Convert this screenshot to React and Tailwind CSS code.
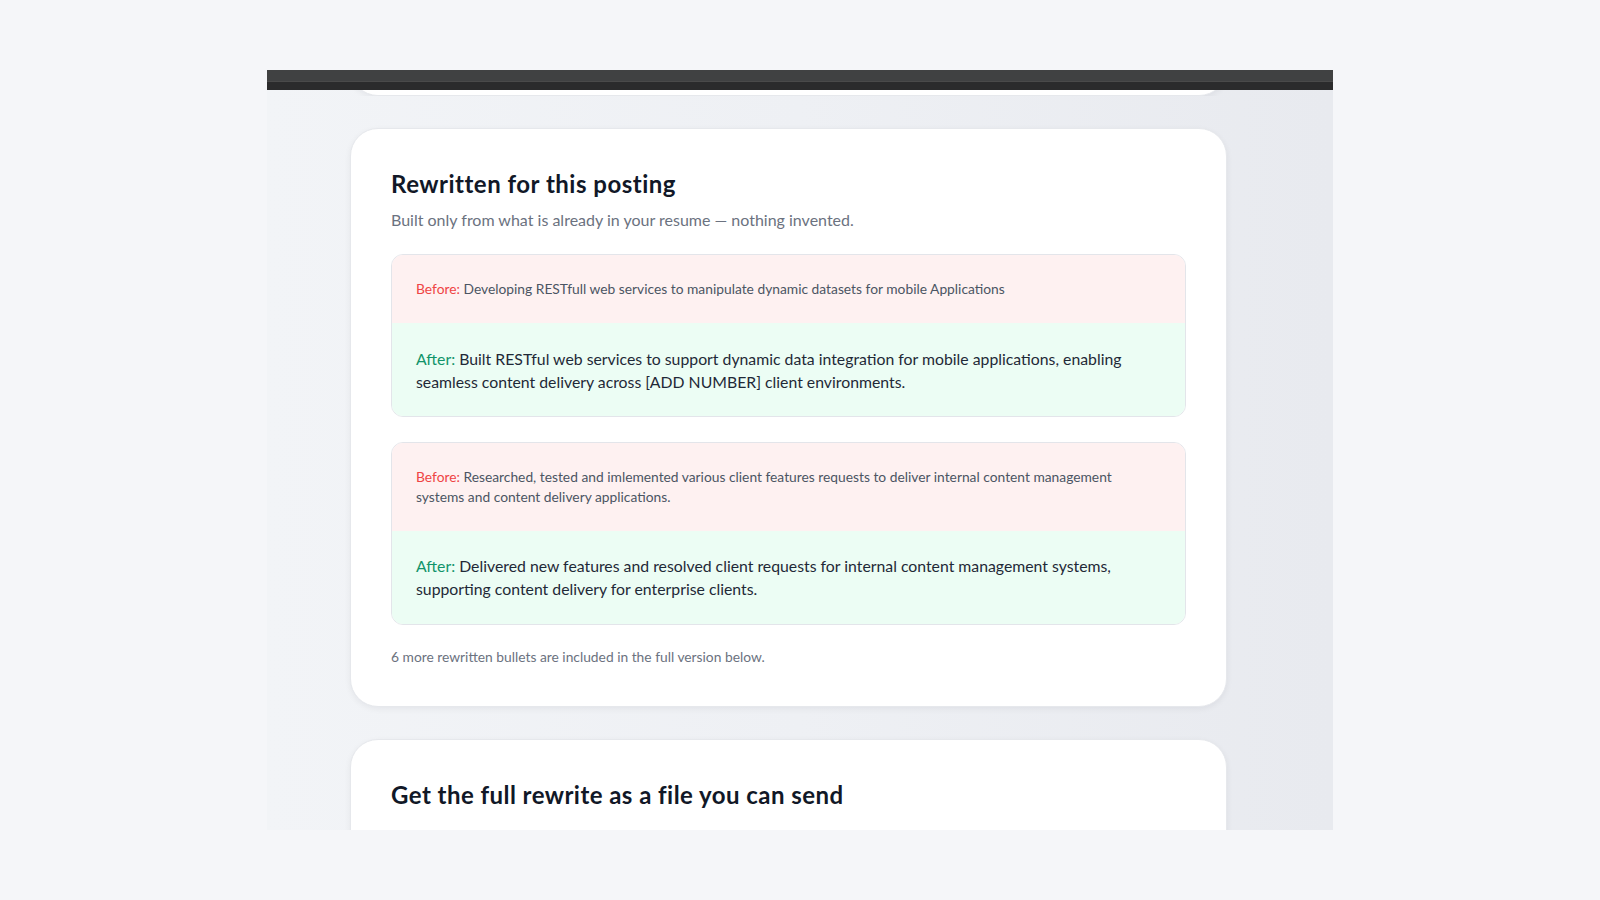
const font = { fontFamily: 'Lato, "Liberation Sans", sans-serif' };

const bullets = [
  {
    before: 'Developing RESTfull web services to manipulate dynamic datasets for mobile Applications',
    after:
      'Built RESTful web services to support dynamic data integration for mobile applications, enabling seamless content delivery across [ADD NUMBER] client environments.',
  },
  {
    before:
      'Researched, tested and imlemented various client features requests to deliver internal content management systems and content delivery applications.',
    after:
      'Delivered new features and resolved client requests for internal content management systems, supporting content delivery for enterprise clients.',
  },
];

function Card({ children, className = '' }) {
  return (
    <div
      className={
        'w-[877px] shrink-0 rounded-[28px] bg-white border border-[#e6e8ec] shadow-[0_2px_6px_rgba(15,23,42,0.06)] ' +
        className
      }
    >
      {children}
    </div>
  );
}

function BulletPair({ before, after }) {
  return (
    <div className="rounded-[12px] border border-[#e3e5ea] overflow-hidden">
      <div className="bg-[#fef1f1] pl-6 pr-[60px] py-6 text-[13.8px] leading-5 text-[#4b5563]">
        <span className="text-[#ef4444]">Before:</span> {before}
      </div>
      <div className="bg-[#ecfdf4] pl-6 pr-[60px] py-[23.5px] text-[15.8px] leading-[23px] text-[#1f2937]">
        <span className="text-[#12946a]">After:</span> {after}
      </div>
    </div>
  );
}

export default function App() {
  return (
    <div className="min-h-[900px] w-full bg-[#f5f6f9] pt-[70px]" style={font}>
      <div className="ml-[267px] w-[1066px] h-[760px] overflow-hidden flex flex-col bg-gradient-to-r from-[#f2f4f7] via-[#eef0f4] to-[#e8eaef]">
        {/* dark top bar */}
        <div className="shrink-0">
          <div className="h-[11px] bg-[#404142]" />
          <div className="h-[1px] bg-[#4a4a4a]" />
          <div className="h-[8px] bg-[#2b2b2c]" />
        </div>

        <div className="flex flex-col gap-[32px] pl-[83px]">
          {/* bottom of previous card */}
          <div className="h-[6px] overflow-hidden flex flex-col justify-end">
            <Card className="h-[80px]" />
          </div>

          <Card className="px-10 pt-10 pb-10">
            <h2 className="text-[24px] leading-[30px] font-bold tracking-[0.5px] text-[#111827]">
              Rewritten for this posting
            </h2>
            <p className="mt-[10px] text-[16px] leading-[22px] text-[#6b7280]">
              Built only from what is already in your resume — nothing invented.
            </p>
            <div className="mt-[23px] flex flex-col gap-[24.5px]">
              {bullets.map((b, i) => (
                <BulletPair key={i} before={b.before} after={b.after} />
              ))}
            </div>
            <p className="mt-[23px] text-[13.8px] leading-[18px] text-[#6b7280]">
              6 more rewritten bullets are included in the full version below.
            </p>
          </Card>

          <Card className="px-10 pt-10 h-[200px]">
            <h2 className="text-[24px] leading-[30px] font-bold tracking-[0.45px] text-[#111827]">
              Get the full rewrite as a file you can send
            </h2>
          </Card>
        </div>
      </div>
    </div>
  );
}
